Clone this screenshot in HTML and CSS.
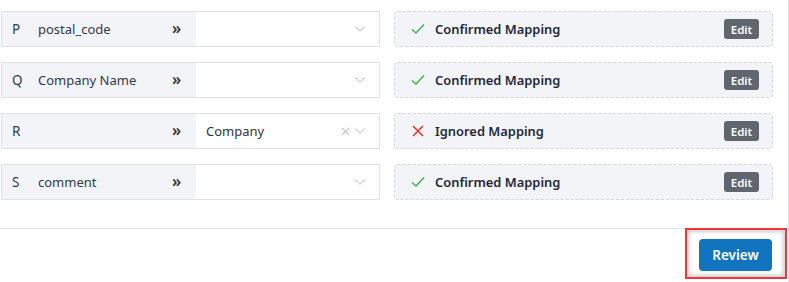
FILE: index.html
```html
<!DOCTYPE html>
<html>
<head>
<meta charset="utf-8">
<link rel="stylesheet" href="styles.css">
</head>
<body>
<div class="page">
  <div class="rows">
    <div class="row">
      <div class="field">
        <div class="source"><span class="letter">P</span><span class="name">postal_code</span><span class="arrow">»</span></div>
        <div class="select"><span class="value"></span><svg class="chev" width="12" height="8" viewBox="0 0 12 8"><path d="M1 1.5 L6 6 L11 1.5" fill="none" stroke="#d0d0d0" stroke-width="1.1"/></svg></div>
      </div>
      <div class="status">
        <svg class="ico" width="14" height="12" viewBox="0 0 14 12"><path d="M1 6.5 L5 10 L13 1.5" fill="none" stroke="#3bb54a" stroke-width="1.5"/></svg>
        <span class="label">Confirmed Mapping</span>
        <span class="edit">Edit</span>
      </div>
    </div>
    <div class="row">
      <div class="field">
        <div class="source"><span class="letter">Q</span><span class="name">Company Name</span><span class="arrow">»</span></div>
        <div class="select"><span class="value"></span><svg class="chev" width="12" height="8" viewBox="0 0 12 8"><path d="M1 1.5 L6 6 L11 1.5" fill="none" stroke="#d0d0d0" stroke-width="1.1"/></svg></div>
      </div>
      <div class="status">
        <svg class="ico" width="14" height="12" viewBox="0 0 14 12"><path d="M1 6.5 L5 10 L13 1.5" fill="none" stroke="#3bb54a" stroke-width="1.5"/></svg>
        <span class="label">Confirmed Mapping</span>
        <span class="edit">Edit</span>
      </div>
    </div>
    <div class="row">
      <div class="field">
        <div class="source"><span class="letter">R</span><span class="name"></span><span class="arrow">»</span></div>
        <div class="select"><span class="value">Company</span><svg class="clear" width="9" height="9" viewBox="0 0 9 9"><path d="M1 1 L8 8 M8 1 L1 8" fill="none" stroke="#c8c8c8" stroke-width="1.1"/></svg><svg class="chev" width="12" height="8" viewBox="0 0 12 8"><path d="M1 1.5 L6 6 L11 1.5" fill="none" stroke="#d0d0d0" stroke-width="1.1"/></svg></div>
      </div>
      <div class="status">
        <svg class="ico" width="14" height="14" viewBox="0 0 14 14"><path d="M2 2 L12 12 M12 2 L2 12" fill="none" stroke="#e0342f" stroke-width="1.5"/></svg>
        <span class="label">Ignored Mapping</span>
        <span class="edit">Edit</span>
      </div>
    </div>
    <div class="row">
      <div class="field">
        <div class="source"><span class="letter">S</span><span class="name">comment</span><span class="arrow">»</span></div>
        <div class="select"><span class="value"></span><svg class="chev" width="12" height="8" viewBox="0 0 12 8"><path d="M1 1.5 L6 6 L11 1.5" fill="none" stroke="#d0d0d0" stroke-width="1.1"/></svg></div>
      </div>
      <div class="status">
        <svg class="ico" width="14" height="12" viewBox="0 0 14 12"><path d="M1 6.5 L5 10 L13 1.5" fill="none" stroke="#3bb54a" stroke-width="1.5"/></svg>
        <span class="label">Confirmed Mapping</span>
        <span class="edit">Edit</span>
      </div>
    </div>
  </div>
  <div class="footer">
    <div class="highlight"><button class="review">Review</button></div>
  </div>
</div>
</body>
</html>
```

FILE: styles.css
```css
html, body {
  margin: 0;
  padding: 0;
  background: #fff;
}
body {
  font-family: "Noto Sans", "Open Sans", sans-serif;
  font-size: 13px;
  color: #333;
}
.page {
  width: 788px;
  height: 282px;
  border-right: 1px solid #e4e4e4;
  box-sizing: content-box;
}
.rows {
  display: flex;
  flex-direction: column;
  gap: 15px;
  padding: 11px 0 0 1px;
  height: 229px;
  box-sizing: border-box;
  border-bottom: 1px solid #e3e3e3;
}
.row {
  display: flex;
  gap: 14px;
  height: 36px;
}
.field {
  width: 379px;
  display: flex;
  border: 1px solid #e1e2e6;
  box-sizing: border-box;
}
.source {
  width: 194px;
  background: #f3f4f8;
  display: flex;
  align-items: center;
  padding-left: 10px;
  box-sizing: border-box;
}
.letter {
  width: 26px;
  color: #2f3a4a;
  font-size: 13.5px;
}
.name {
  flex: 1;
  color: #2f3a4a;
}
.arrow {
  width: 24px;
  font-size: 16px;
  font-weight: 600;
  color: #333;
  margin-top: -3px;
}
.select {
  flex: 1;
  display: flex;
  align-items: center;
  padding: 0 13px 0 10px;
  background: #fff;
}
.value {
  flex: 1;
  color: #333;
}
.clear {
  margin-right: 4px;
}
.status {
  width: 379px;
  display: flex;
  align-items: center;
  background: #f3f4f8;
  border: 1px dashed #d5d7dd;
  border-radius: 4px;
  box-sizing: border-box;
  padding: 0 13px 0 16px;
}
.ico {
  margin-right: 10px;
}
.label {
  flex: 1;
  font-weight: 600;
  color: #1f2937;
  font-size: 12.9px;
}
.edit {
  background: #5f6670;
  color: #fff;
  font-size: 11.5px;
  font-weight: 600;
  border-radius: 3px;
  width: 35px;
  height: 20px;
  display: flex;
  align-items: center;
  justify-content: center;
}
.footer {
  display: flex;
  justify-content: flex-end;
  margin-top: -1px;
}
.highlight {
  border: 2.5px solid #f0363b;
  padding: 9px 13px 6px 12px;
  box-shadow: inset 0 0 4px 2px rgba(0,0,0,0.2);
  margin-right: 1px;
}
.review {
  width: 73px;
  height: 32px;
  background: #1174be;
  color: #fff;
  border: none;
  border-radius: 4px;
  font-family: "Noto Sans", "Open Sans", sans-serif;
  font-size: 13.5px;
  font-weight: 600;
  display: block;
}
```
